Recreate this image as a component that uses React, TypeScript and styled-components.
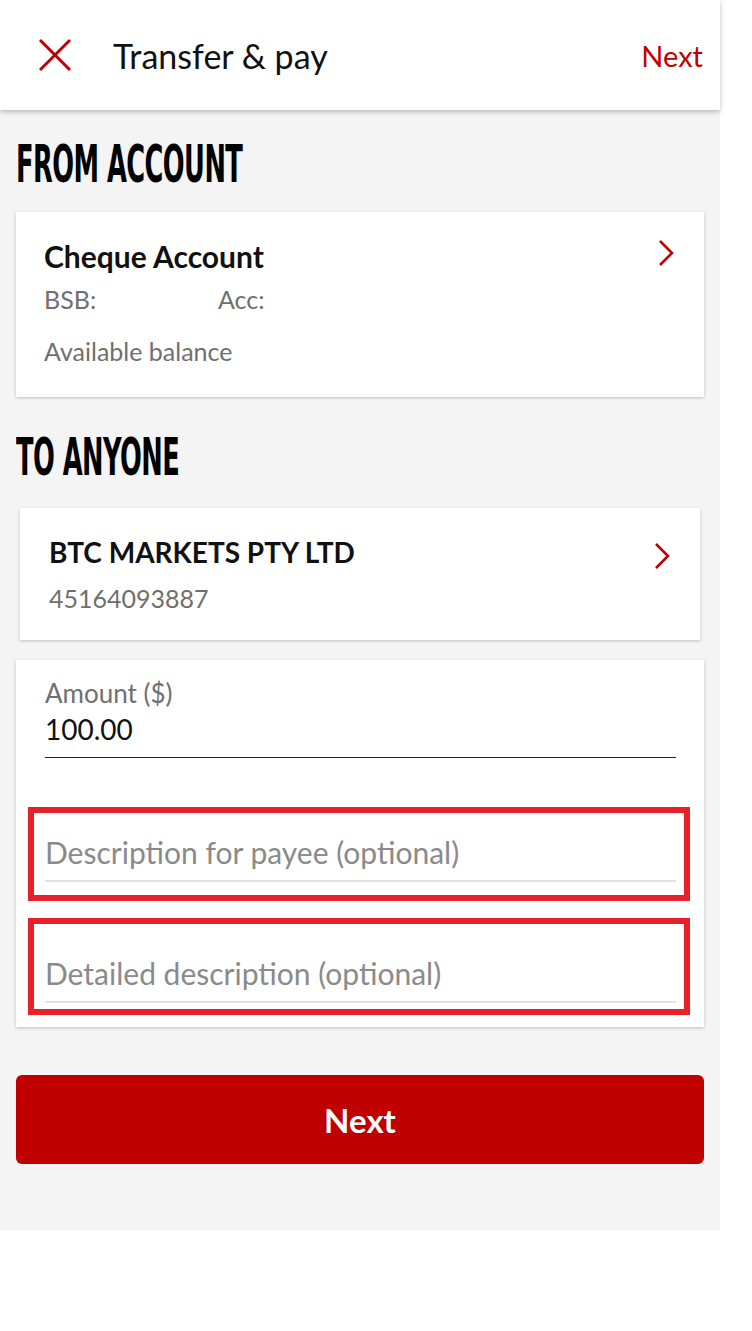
import React from 'react'
import styled, { createGlobalStyle } from 'styled-components'

const RED = '#c00000'
const MARK = '#e8202a'

const GlobalStyle = createGlobalStyle`
  body {
    margin: 0;
    background: #ffffff;
    font-family: Lato, 'Open Sans', sans-serif;
  }
`

const Screen = styled.div`
  width: 720px;
  height: 1230px;
  background: #f4f4f4;
  display: flex;
  flex-direction: column;
`

const Header = styled.header`
  height: 110px;
  flex-shrink: 0;
  background: #fff;
  box-shadow: 0 2px 5px rgba(0, 0, 0, 0.25);
  display: flex;
  align-items: center;
  padding: 0 17px 0 38px;
  position: relative;
  z-index: 1;
`

const Title = styled.h1`
  margin: 0 0 0 41px;
  font-size: 34px;
  font-weight: 400;
  color: #111;
`

const HeaderLink = styled.a`
  margin-left: auto;
  font-size: 29px;
  color: ${RED};
  text-decoration: none;
`

const Body = styled.main`
  padding: 0 16px;
  display: flex;
  flex-direction: column;
`

const SectionTitle = styled.h2<{ top: number }>`
  margin: ${(p) => p.top}px 0 0;
  height: 62px;
  font-family: 'DejaVu Sans Condensed', 'DejaVu Sans', sans-serif;
  font-weight: 700;
  font-size: 51px;
  line-height: 62px;
  color: #000;
  transform: scaleX(0.56);
  transform-origin: left center;
  white-space: nowrap;
  letter-spacing: -1px;
`

const Card = styled.section<{ inset?: number; top?: number }>`
  background: #fff;
  box-shadow: 0 1px 3px rgba(0, 0, 0, 0.22);
  margin: ${(p) => p.top || 0}px ${(p) => p.inset || 0}px 0;
`

const SelectCard = styled(Card)<{ pad: string }>`
  display: flex;
  justify-content: space-between;
  align-items: flex-start;
  padding: ${(p) => p.pad};
`

const Name = styled.div<{ size?: number }>`
  font-size: ${(p) => p.size || 28}px;
  font-weight: 700;
  color: #111;
  line-height: 36px;
`

const Meta = styled.div<{ top?: number }>`
  font-size: 25px;
  color: #6f6f6f;
  line-height: 30px;
  margin-top: ${(p) => p.top || 0}px;
  display: flex;
`

const MetaCell = styled.span`
  width: 174px;
`

const Chevron = styled.svg<{ drop: number }>`
  width: 20px;
  height: 30px;
  flex-shrink: 0;
  margin-top: ${(p) => p.drop}px;
`

const FormCard = styled(Card)`
  padding: 18px 14px 12px 12px;
  display: flex;
  flex-direction: column;
`

const AmountField = styled.div`
  padding: 0 14px 0 17px;
  margin-bottom: 49px;
`

const Label = styled.div`
  font-size: 26px;
  color: #6f6f6f;
  line-height: 30px;
`

const Value = styled.div`
  font-size: 28px;
  color: #111;
  line-height: 36px;
  margin-top: 3px;
  padding-bottom: 10px;
  border-bottom: 1px solid #222;
`

const Marked = styled.div<{ gap?: number }>`
  border: 6px solid ${MARK};
  padding: 0 8px 0 11px;
  margin-top: ${(p) => p.gap || 0}px;
`

const Placeholder = styled.div<{ top: number; bottom: number }>`
  font-size: 30px;
  color: #8a8a8a;
  line-height: 36px;
  padding: ${(p) => p.top}px 0 10px;
  border-bottom: 2px solid #e2e2e2;
  margin-bottom: ${(p) => p.bottom}px;
`

const Button = styled.button`
  margin-top: 48px;
  height: 89px;
  border: none;
  border-radius: 6px;
  background: ${RED};
  color: #fff;
  font-family: Lato, 'Open Sans', sans-serif;
  font-size: 33px;
  font-weight: 700;
`

function ChevronIcon({ drop }: { drop: number }) {
  return (
    <Chevron viewBox="0 0 20 30" drop={drop}>
      <path d="M4 3 L16 15 L4 27" fill="none" stroke={RED} strokeWidth="2.6" />
    </Chevron>
  )
}

export default function App() {
  return (
    <>
      <GlobalStyle />
      <Screen>
        <Header>
          <svg width="34" height="34" viewBox="0 0 34 34">
            <path d="M2 2 L32 32 M32 2 L2 32" stroke={RED} strokeWidth="3" />
          </svg>
          <Title>Transfer &amp; pay</Title>
          <HeaderLink href="#">Next</HeaderLink>
        </Header>
        <Body>
          <SectionTitle top={24}>FROM ACCOUNT</SectionTitle>
          <SelectCard pad="26px 28px 31px 28px" top={16}>
            <div>
              <Name size={30}>Cheque Account</Name>
              <Meta top={10}>
                <MetaCell>BSB:</MetaCell>
                <span>Acc:</span>
              </Meta>
              <Meta top={22}>Available balance</Meta>
            </div>
            <ChevronIcon drop={0} />
          </SelectCard>
          <SectionTitle top={30}>TO ANYONE</SectionTitle>
          <SelectCard pad="26px 28px 27px 29px" inset={4} top={19}>
            <div>
              <Name>BTC MARKETS PTY LTD</Name>
              <Meta top={13}>45164093887</Meta>
            </div>
            <ChevronIcon drop={7} />
          </SelectCard>
          <FormCard top={20}>
            <AmountField>
              <Label>Amount ($)</Label>
              <Value>100.00</Value>
            </AmountField>
            <Marked>
              <Placeholder top={21} bottom={13}>
                Description for payee (optional)
              </Placeholder>
            </Marked>
            <Marked gap={17}>
              <Placeholder top={31} bottom={6}>
                Detailed description (optional)
              </Placeholder>
            </Marked>
          </FormCard>
          <Button>Next</Button>
        </Body>
      </Screen>
    </>
  )
}
